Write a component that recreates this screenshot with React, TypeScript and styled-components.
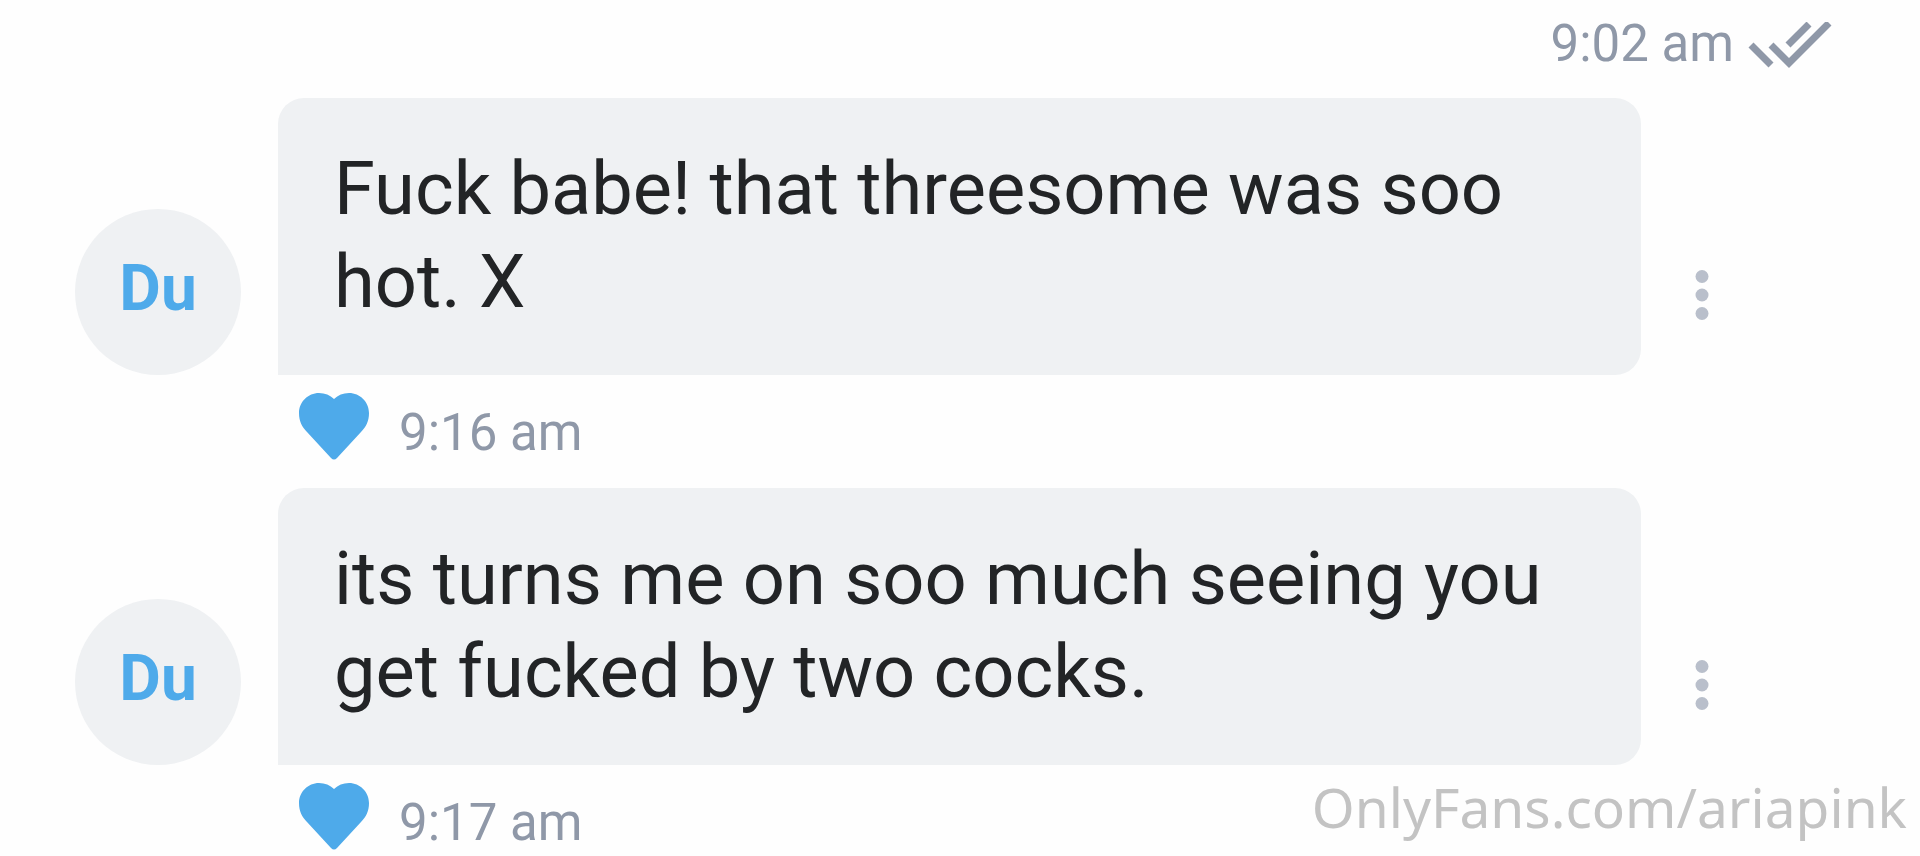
import React from "react";
import styled, { createGlobalStyle } from "styled-components";

const GlobalStyle = createGlobalStyle`
  *, *::before, *::after { box-sizing: border-box; }
  body {
    margin: 0;
    background: #fefefe;
    font-family: Roboto, "Liberation Sans", sans-serif;
  }
`;

const Page = styled.main`
  position: relative;
  min-height: 100vh;
  overflow: hidden;
`;

const SentStatus = styled.div`
  display: flex;
  justify-content: flex-end;
  align-items: flex-end;
  gap: 14px;
  height: 98px;
  padding: 0 88px 24px 0;
`;

const Time = styled.time`
  font-size: 51px;
  line-height: 60px;
  color: #8f98a8;
`;

const Thread = styled.ol`
  display: flex;
  flex-direction: column;
  gap: 23px;
  margin: 0;
  padding: 0 178px 0 75px;
  list-style: none;
`;

const Message = styled.li`
  display: grid;
  grid-template-columns: 166px minmax(0, 1fr) 80px;
  column-gap: 21px;
  align-items: end;
`;

const Avatar = styled.div`
  display: flex;
  align-items: center;
  justify-content: center;
  width: 166px;
  height: 166px;
  padding-bottom: 6px;
  border-radius: 50%;
  background: #eff1f3;
  color: #4eaaea;
  font-size: 64px;
  line-height: 76px;
  font-weight: 700;
`;

const Bubble = styled.p`
  margin: 0 0 0 16px;
  padding: 44px 56px 47px;
  border-radius: 26px 26px 26px 0;
  background: #eff1f3;
  color: #222426;
  font-size: 74px;
  line-height: 93px;
`;

const MenuButton = styled.button`
  align-self: center;
  display: flex;
  justify-content: center;
  margin-top: 116px;
  padding: 0;
  border: 0;
  background: none;
  color: #b9bfcb;
  cursor: pointer;
`;

const Meta = styled.div`
  grid-column: 2;
  display: flex;
  align-items: flex-end;
  gap: 30px;
  height: 90px;
  padding: 0 0 2px 37px;
`;

const LikeButton = styled.button`
  display: flex;
  padding: 0 0 2px;
  border: 0;
  background: none;
  color: #4eaaea;
  cursor: pointer;
`;

const ProfileLink = styled.a`
  position: absolute;
  right: 13px;
  bottom: 12px;
  color: #c3c3c3;
  font-family: "Noto Sans", "Open Sans", sans-serif;
  font-size: 55px;
  line-height: 74px;
  font-weight: 400;
  text-decoration: none;
`;

const DoubleCheck = () => (
  <svg width="84" height="52" viewBox="0 0 84 52" fill="none" stroke="#8f98a8" strokeWidth="7" aria-label="Read" role="img">
    <path d="M3 23 L23 43" />
    <path d="M23 23 L41 41 L81 1" />
    <path d="M40 23 L61 2" />
  </svg>
);

const Heart = () => (
  <svg width="70" height="68" viewBox="0 0 70 68" fill="currentColor" aria-hidden="true">
    <path d="M35 6C31 2 26 0 20 0C9 0 0 9 0 20C0 28 3 34 8 39L32 65Q35 68 38 65L62 39C67 34 70 28 70 20C70 9 61 0 50 0C44 0 39 2 35 6Z" />
  </svg>
);

const Dots = () => (
  <svg width="14" height="52" viewBox="0 0 14 52" fill="currentColor" aria-hidden="true">
    <circle cx="7" cy="7.500" r="6.500" />
    <circle cx="7" cy="26" r="6.500" />
    <circle cx="7" cy="44.500" r="6.500" />
  </svg>
);

const messages = [
  { text: "Fuck babe! that threesome was soo hot. X", time: "9:16 am" },
  { text: "its turns me on soo much seeing you get fucked by two cocks.", time: "9:17 am" },
];

export default function App() {
  return (
    <>
      <GlobalStyle />
      <Page>
        <SentStatus>
          <Time>9:02 am</Time>
          <DoubleCheck />
        </SentStatus>
        <Thread>
          {messages.map((message) => (
            <Message key={message.time}>
              <Avatar>Du</Avatar>
              <Bubble>{message.text}</Bubble>
              <MenuButton type="button" aria-label="Message options">
                <Dots />
              </MenuButton>
              <Meta>
                <LikeButton type="button" aria-label="Like">
                  <Heart />
                </LikeButton>
                <Time>{message.time}</Time>
              </Meta>
            </Message>
          ))}
        </Thread>
        <ProfileLink href="#ariapink">OnlyFans.com/ariapink</ProfileLink>
      </Page>
    </>
  );
}
